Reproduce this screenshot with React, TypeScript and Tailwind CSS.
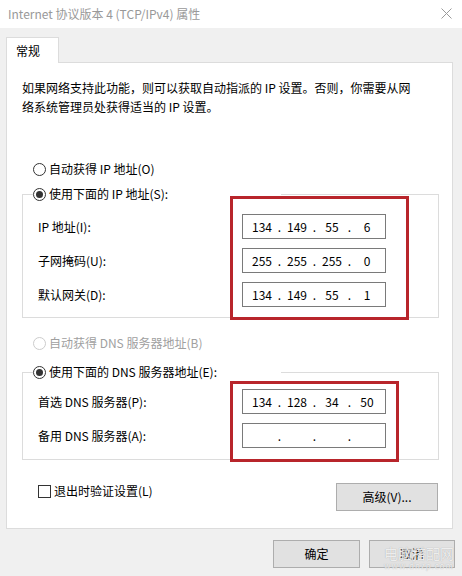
const font = {
  fontFamily: '"Noto Sans CJK SC", "Noto Sans", sans-serif',
};

function Radio({ checked, disabled }: { checked?: boolean; disabled?: boolean }) {
  return (
    <span
      className={`flex h-[13px] w-[13px] shrink-0 items-center justify-center rounded-full border bg-white ${
        disabled ? "border-[#cccccc]" : "border-[#333333]"
      }`}
    >
      {checked && <span className="h-[7px] w-[7px] rounded-full bg-[#333333]" />}
    </span>
  );
}

function IpBox({ parts }: { parts: string[] }) {
  return (
    <div className="flex h-[25px] w-[144px] items-center border border-[#7a7a7a] bg-white pl-[4px] text-[12px] text-black">
      {parts.map((p, i) => (
        <div key={i} className="flex items-center">
          <span className="w-[30px] text-center">{p}</span>
          {i < 3 && <span className="w-[5px] text-center">.</span>}
        </div>
      ))}
    </div>
  );
}

function Row({ label, parts }: { label: string; parts: string[] }) {
  return (
    <div className="flex items-center">
      <span className="ml-[5px] w-[204px] text-[12px] text-black">{label}</span>
      <IpBox parts={parts} />
    </div>
  );
}

export default function App() {
  return (
    <div
      className="relative h-[576px] w-[462px] overflow-hidden bg-[#f0f0f0] text-[12px] leading-[16px] text-black"
      style={font}
    >
      {/* title bar */}
      <div className="flex h-[28px] items-center justify-between bg-white pl-[8px] pr-[10px]">
        <span className="text-[12px] text-[#999999]">Internet 协议版本 4 (TCP/IPv4) 属性</span>
        <svg width="11" height="11" viewBox="0 0 11 11" className="mt-[-2px]">
          <path d="M0.5 0.5 L10.5 10.5 M10.5 0.5 L0.5 10.5" stroke="#9a9a9a" strokeWidth="1" />
        </svg>
      </div>

      <div className="pl-[6px] pr-[9px] pt-[9px]">
        <div className="relative z-10 -mb-px flex h-[26px] w-[53px] items-center border border-b-0 border-[#dcdcdc] bg-white pl-[9px]">
          常规
        </div>
        <div className="h-[467px] border border-[#dcdcdc] bg-white pl-[15px] pr-[13px] pt-[15px]">
          <p className="leading-[19px]">
            如果网络支持此功能，则可以获取自动指派的 IP 设置。否则，你需要从网
            <br />
            络系统管理员处获得适当的 IP 设置。
          </p>

          <div className="ml-[11px] mt-[45px] flex h-[16px] items-center gap-[3px]">
            <Radio />
            <span>自动获得 IP 地址(O)</span>
          </div>

          <fieldset className="mt-[9px] border border-[#dcdcdc] pb-[10px] pl-[10px]">
            <legend className="flex h-[16px] w-[248px] items-center gap-[3px]">
              <Radio checked />
              <span>使用下面的 IP 地址(S):</span>
            </legend>
            <div className="flex flex-col gap-[9px] pt-[12px]">
              <Row label="IP 地址(I):" parts={["134", "149", "55", "6"]} />
              <Row label="子网掩码(U):" parts={["255", "255", "255", "0"]} />
              <Row label="默认网关(D):" parts={["134", "149", "55", "1"]} />
            </div>
          </fieldset>

          <div className="ml-[11px] mt-[17px] flex h-[16px] items-center gap-[3px] text-[#a0a0a0]">
            <Radio disabled />
            <span>自动获得 DNS 服务器地址(B)</span>
          </div>

          <fieldset className="mt-[13px] border border-[#dcdcdc] pb-[11px] pl-[10px]">
            <legend className="flex h-[16px] w-[248px] items-center gap-[3px]">
              <Radio checked />
              <span>使用下面的 DNS 服务器地址(E):</span>
            </legend>
            <div className="flex flex-col gap-[9px] pt-[9px]">
              <Row label="首选 DNS 服务器(P):" parts={["134", "128", "34", "50"]} />
              <Row label="备用 DNS 服务器(A):" parts={["", "", "", ""]} />
            </div>
          </fieldset>

          <div className="mt-[23px] flex items-start justify-between">
            <div className="ml-[16px] flex h-[16px] items-center gap-[3px]">
              <span className="h-[13px] w-[13px] border border-[#333333] bg-white" />
              <span>退出时验证设置(L)</span>
            </div>
            <button className="mr-[1px] h-[28px] w-[102px] border border-[#adadad] bg-[#e1e1e1]">高级(V)...</button>
          </div>
        </div>
      </div>

      <div className="mt-[11px] flex justify-end gap-[9px] pr-[7px]">
        <button className="h-[28px] w-[87px] border border-[#adadad] bg-[#e1e1e1]">确定</button>
        <button className="h-[28px] w-[86px] border border-[#adadad] bg-[#e1e1e1]">取消</button>
      </div>

      {/* annotation boxes */}
      <div className="absolute left-[230px] top-[196px] h-[124px] w-[179px] border-[3px] border-[#b8252b]" />
      <div className="absolute left-[230px] top-[381px] h-[81px] w-[169px] border-[3px] border-[#b8252b]" />

      {/* watermark */}
      <div className="pointer-events-none absolute left-[384px] top-[545px] flex flex-col items-center leading-none text-white/80 [text-shadow:0_0_1px_#9a9a9a]">
        <span className="text-[14px] leading-[16px]">电脑搭配网</span>
        <span className="text-[8px] leading-[10px] tracking-[1px]">www.dnzp.com</span>
      </div>
    </div>
  );
}
